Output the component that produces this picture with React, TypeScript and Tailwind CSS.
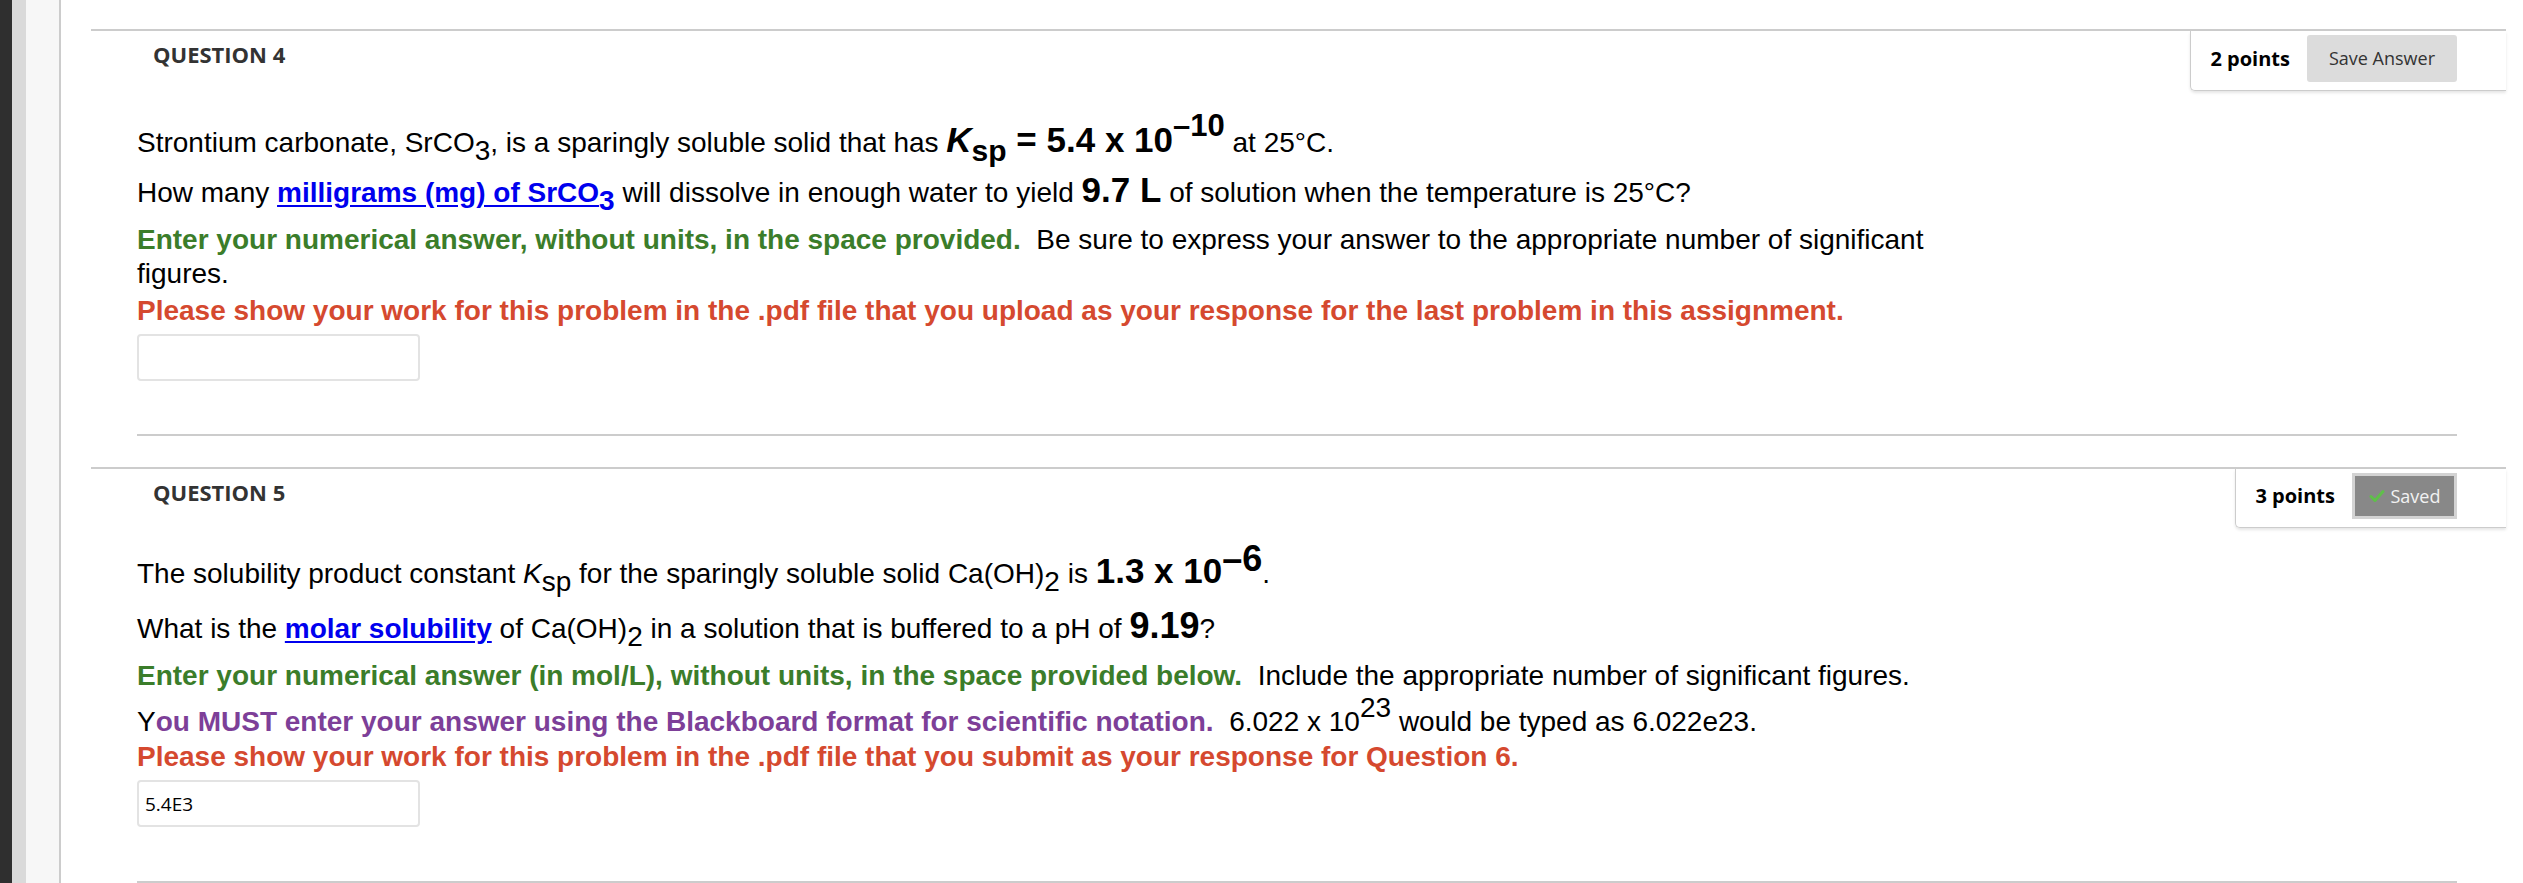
import type { ReactNode } from "react";

const bodyFont = "font-['Liberation_Sans',Arial,Helvetica,sans-serif]";
const uiFont = "font-['Open_Sans',Arial,sans-serif]";

function Sub({ children }: { children: ReactNode }) {
  return <span className="text-[28px] leading-[0] align-[-8px]">{children}</span>;
}

function Big({ children }: { children: ReactNode }) {
  return <b className="text-[35px] leading-[0] font-bold">{children}</b>;
}

function Link({ children }: { children: ReactNode }) {
  return <a className="font-bold text-[#0000ee] underline underline-offset-[3px]">{children}</a>;
}

const green = "font-bold text-[#3b7d2a]";
const red = "font-bold text-[#d5492f]";
const purple = "font-bold text-[#7d3f98]";

function PointsPanel({ points, children }: { points: string; children: ReactNode }) {
  return (
    <div className="flex items-center gap-[17px] border-l border-b border-[#cccccc] rounded-bl-[5px] shadow-[0_2px_3px_rgba(0,0,0,0.10)] pl-[19px] pr-[49px] pt-[4px] pb-[8px]">
      <span className={`${uiFont} font-bold text-[20px] text-black`}>{points}</span>
      {children}
    </div>
  );
}

function AnswerInput({ value }: { value?: string }) {
  return (
    <div
      className={`${uiFont} flex items-center w-[283px] h-[47px] pl-[6px] border-2 border-[#e3e3e3] rounded-[4px] text-[19px] text-black`}
    >
      {value}
    </div>
  );
}

function QuestionHeader({ label, panel }: { label: string; panel: ReactNode }) {
  return (
    <div className="flex justify-between items-start">
      <h2 className={`${uiFont} pl-[62px] pt-[8px] font-bold text-[22px] leading-[30px] text-[#333333]`}>
        {label}
      </h2>
      {panel}
    </div>
  );
}

export default function App() {
  return (
    <div className="flex min-h-screen bg-white">
      <div className="w-[12px] bg-[#2f2f2f]" />
      <div className="w-[14px] bg-[#dadada]" />
      <div className="w-[33px] bg-[#f7f7f7] border-r-2 border-[#cccccc] box-content" />
      <main className={`flex-1 pl-[30px] pr-[17px] pt-[29px] ${bodyFont} text-[28px] text-black`}>
        {/* question 4 */}
        <section className="border-t-2 border-[#cccccc]">
          <QuestionHeader
            label="QUESTION 4"
            panel={
              <PointsPanel points="2 points">
                <button
                  className={`${uiFont} w-[150px] h-[47px] rounded-[3px] bg-[#dcdcdc] text-[18px] text-[#333333]`}
                >
                  Save Answer
                </button>
              </PointsPanel>
            }
          />
          <div className="pl-[46px] max-w-[1846px] flex flex-col leading-[34px]">
            <p className="mt-[35px]">
              Strontium carbonate, SrCO<Sub>3</Sub>, is a sparingly soluble solid that has{" "}
              <Big>
                <i>K</i>
                <span className="text-[30px] leading-[0] align-[-9px]">sp</span> = 5.4 x 10
                <span className="text-[31px] leading-[0] align-[16px]">–10</span>
              </Big>{" "}
              at 25°C.
            </p>
            <p className="mt-[16px]">
              How many{" "}
              <Link>
                milligrams (mg) of SrCO<Sub>3</Sub>
              </Link>{" "}
              will dissolve in enough water to yield <Big>9.7 L</Big> of solution when the temperature is 25°C?
            </p>
            <p className="mt-[13px]">
              <span className={green}>Enter your numerical answer, without units, in the space provided.</span>
              {"\u00a0 "}Be sure to express your answer to the appropriate number of significant figures.
            </p>
            <p className={`mt-[3px] ${red}`}>
              Please show your work for this problem in the .pdf file that you upload as your response for the
              last problem in this assignment.
            </p>
            <div className="mt-[6px]">
              <AnswerInput />
            </div>
          </div>
          <div className="mt-[53px] ml-[46px] mr-[49px] h-[2px] bg-[#cccccc]" />
        </section>

        {/* question 5 */}
        <section className="mt-[31px] border-t-2 border-[#cccccc]">
          <QuestionHeader
            label="QUESTION 5"
            panel={
              <PointsPanel points="3 points">
                <div
                  className={`${uiFont} flex items-center justify-center gap-[6px] w-[105px] h-[46px] bg-[#888888] border-[3px] border-[#d3d3d3] text-[18px] text-[#f2f2f2]`}
                >
                  <svg width="16" height="14" viewBox="0 0 16 14">
                    <path d="M2 7.5 L6 11.5 L14 2.5" fill="none" stroke="#5fbf4a" strokeWidth="3" strokeLinecap="round" strokeLinejoin="round" />
                  </svg>
                  Saved
                </div>
              </PointsPanel>
            }
          />
          <div className="pl-[46px] max-w-[1846px] flex flex-col leading-[34px]">
            <p className="mt-[29px]">
              The solubility product constant <i>K</i>
              <Sub>sp</Sub> for the sparingly soluble solid Ca(OH)<Sub>2</Sub> is{" "}
              <Big>
                1.3 x 10<span className="text-[36px] leading-[0] align-[12px]">–6</span>
              </Big>
              .
            </p>
            <p className="mt-[21px]">
              What is the <Link>molar solubility</Link> of Ca(OH)<Sub>2</Sub> in a solution that is buffered to a pH
              of <b className="text-[36px] leading-[0] font-bold">9.19</b>?
            </p>
            <p className="mt-[13px]">
              <span className={green}>
                Enter your numerical answer (in mol/L), without units, in the space provided below.
              </span>
              {"\u00a0 "}Include the appropriate number of significant figures.
            </p>
            <p className="mt-[12px]">
              Y<span className={purple}>ou MUST enter your answer using the Blackboard format for scientific notation.</span>
              {"\u00a0 "}6.022 x 10<span className="text-[28px] leading-[0] align-[14px]">23</span> would be typed as
              6.022e23.
            </p>
            <p className={`mt-[1px] ${red}`}>
              Please show your work for this problem in the .pdf file that you submit as your response for Question 6.
            </p>
            <div className="mt-[6px]">
              <AnswerInput value="5.4E3" />
            </div>
          </div>
          <div className="mt-[54px] ml-[46px] mr-[49px] h-[2px] bg-[#cccccc]" />
        </section>
      </main>
    </div>
  );
}
